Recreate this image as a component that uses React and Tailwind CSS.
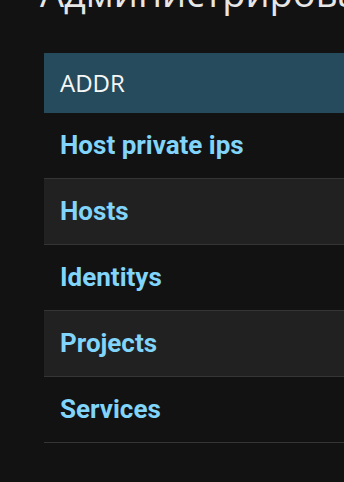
const models = ['Host private ips', 'Hosts', 'Identitys', 'Projects', 'Services'];

export default function App() {
  return (
    <div className="min-h-screen bg-[#121212] overflow-hidden pl-[40px]" style={{ fontFamily: '"Open Sans", sans-serif' }}>
      <h1 className="mt-[-30px] text-[38px] leading-[44px] font-normal text-[#e6e6e6] whitespace-nowrap">
        Администрирование Django
      </h1>
      <div className="mt-[39px] ml-[4px] w-[400px]">
        <div className="h-[60px] bg-[#264b5d] flex items-center px-[16px] text-[24px] font-medium text-[#f7f7f7]">ADDR</div>
        {models.map((m, i) => (
          <div
            key={m}
            className={`h-[66px] flex items-center px-[16px] border-b border-[#353535] ${i % 2 === 1 ? 'bg-[#212121]' : 'bg-[#121212]'}`}
          >
            <a href="#" className="text-[26px] font-bold text-[#81d4fa]" style={{ fontFamily: 'Roboto, sans-serif' }}>
              {m}
            </a>
          </div>
        ))}
      </div>
    </div>
  );
}
